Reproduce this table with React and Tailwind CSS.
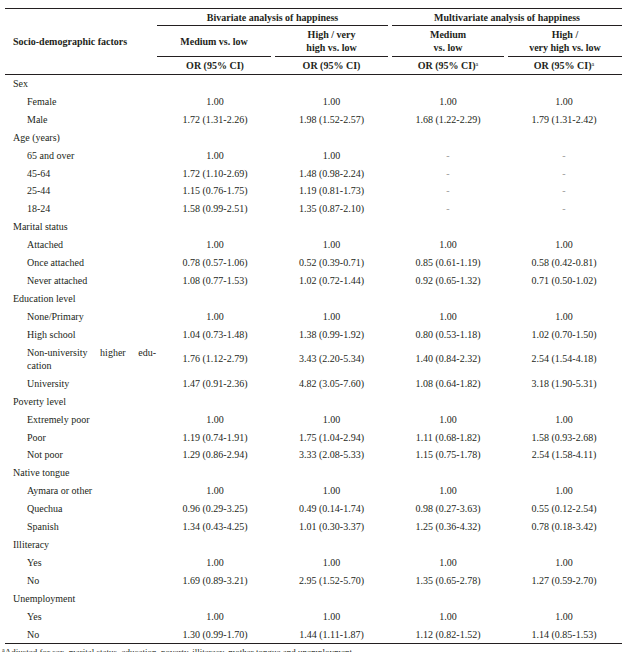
import React from "react";

const grid = "grid grid-cols-[152px_116px_117px_116px_116px]";

const rows = [
  { label: "Sex", cat: true },
  { label: "Female", v: ["1.00", "1.00", "1.00", "1.00"] },
  { label: "Male", v: ["1.72 (1.31-2.26)", "1.98 (1.52-2.57)", "1.68 (1.22-2.29)", "1.79 (1.31-2.42)"] },
  { label: "Age (years)", cat: true },
  { label: "65 and over", v: ["1.00", "1.00", "-", "-"] },
  { label: "45-64", v: ["1.72 (1.10-2.69)", "1.48 (0.98-2.24)", "-", "-"] },
  { label: "25-44", v: ["1.15 (0.76-1.75)", "1.19 (0.81-1.73)", "-", "-"] },
  { label: "18-24", v: ["1.58 (0.99-2.51)", "1.35 (0.87-2.10)", "-", "-"] },
  { label: "Marital status", cat: true },
  { label: "Attached", v: ["1.00", "1.00", "1.00", "1.00"] },
  { label: "Once attached", v: ["0.78 (0.57-1.06)", "0.52 (0.39-0.71)", "0.85 (0.61-1.19)", "0.58 (0.42-0.81)"] },
  { label: "Never attached", v: ["1.08 (0.77-1.53)", "1.02 (0.72-1.44)", "0.92 (0.65-1.32)", "0.71 (0.50-1.02)"] },
  { label: "Education level", cat: true },
  { label: "None/Primary", v: ["1.00", "1.00", "1.00", "1.00"] },
  { label: "High school", v: ["1.04 (0.73-1.48)", "1.38 (0.99-1.92)", "0.80 (0.53-1.18)", "1.02 (0.70-1.50)"] },
  { label: "nonuni", v: ["1.76 (1.12-2.79)", "3.43 (2.20-5.34)", "1.40 (0.84-2.32)", "2.54 (1.54-4.18)"] },
  { label: "University", v: ["1.47 (0.91-2.36)", "4.82 (3.05-7.60)", "1.08 (0.64-1.82)", "3.18 (1.90-5.31)"] },
  { label: "Poverty level", cat: true },
  { label: "Extremely poor", v: ["1.00", "1.00", "1.00", "1.00"] },
  { label: "Poor", v: ["1.19 (0.74-1.91)", "1.75 (1.04-2.94)", "1.11 (0.68-1.82)", "1.58 (0.93-2.68)"] },
  { label: "Not poor", v: ["1.29 (0.86-2.94)", "3.33 (2.08-5.33)", "1.15 (0.75-1.78)", "2.54 (1.58-4.11)"] },
  { label: "Native tongue", cat: true },
  { label: "Aymara or other", v: ["1.00", "1.00", "1.00", "1.00"] },
  { label: "Quechua", v: ["0.96 (0.29-3.25)", "0.49 (0.14-1.74)", "0.98 (0.27-3.63)", "0.55 (0.12-2.54)"] },
  { label: "Spanish", v: ["1.34 (0.43-4.25)", "1.01 (0.30-3.37)", "1.25 (0.36-4.32)", "0.78 (0.18-3.42)"] },
  { label: "Illiteracy", cat: true },
  { label: "Yes", v: ["1.00", "1.00", "1.00", "1.00"] },
  { label: "No", v: ["1.69 (0.89-3.21)", "2.95 (1.52-5.70)", "1.35 (0.65-2.78)", "1.27 (0.59-2.70)"] },
  { label: "Unemployment", cat: true },
  { label: "Yes", v: ["1.00", "1.00", "1.00", "1.00"] },
  { label: "No", v: ["1.30 (0.99-1.70)", "1.44 (1.11-1.87)", "1.12 (0.82-1.52)", "1.14 (0.85-1.53)"] },
];

function Row({ r }) {
  if (r.cat) {
    return (
      <div className="h-[17.93px] flex items-center pl-[8px]">{r.label}</div>
    );
  }
  const tall = r.label === "nonuni";
  return (
    <div className={`${grid} items-center ${tall ? "h-[31px]" : "h-[17.93px]"}`}>
      {tall ? (
        <div className="pl-[22px] pr-[1px] leading-[13px]">
          <div className="flex justify-between">
            <span>Non-university</span>
            <span>higher</span>
            <span>edu-</span>
          </div>
          <div>cation</div>
        </div>
      ) : (
        <div className="pl-[22px]">{r.label}</div>
      )}
      {r.v.map((x, i) => (
        <div key={i} className={`text-center ${x === "-" ? "text-[#9a9a9a]" : ""}`}>
          {x}
        </div>
      ))}
    </div>
  );
}

export default function App() {
  return (
    <div
      className="w-[629px] h-[652px] bg-white overflow-hidden text-[10px] text-[#231f20] leading-[13px]"
      style={{ fontFamily: '"Liberation Serif", "Times New Roman", serif' }}
    >
      <div className="ml-[5px] w-[617px] pt-[8px]">
        <div className="border-t-[1.5px] border-[#231f20]" />

        {/* header row 1 */}
        <div className={`${grid} h-[17px]`}>
          <div />
          <div className="col-span-2 mr-[2px] border-b border-[#231f20] flex items-center justify-center font-bold">
            Bivariate analysis of happiness
          </div>
          <div className="col-span-2 ml-[2px] border-b border-[#231f20] flex items-center justify-center font-bold">
            Multivariate analysis of happiness
          </div>
        </div>

        {/* header row 2 */}
        <div className={`${grid} h-[31px] font-bold`}>
          <div className="flex items-center pl-[8px]">Socio-demographic factors</div>
          <div className="mr-[2px] border-b border-[#231f20] flex items-center justify-center">
            Medium vs. low
          </div>
          <div className="mx-[2px] border-b border-[#231f20] flex flex-col items-center justify-center">
            <span>High / very</span>
            <span>high vs. low</span>
          </div>
          <div className="mx-[2px] border-b border-[#231f20] flex flex-col items-center justify-center">
            <span>Medium</span>
            <span>vs. low</span>
          </div>
          <div className="ml-[2px] border-b border-[#231f20] flex flex-col items-center justify-center">
            <span>High /</span>
            <span>very high vs. low</span>
          </div>
        </div>

        {/* header row 3 */}
        <div className={`${grid} h-[16.5px] items-center font-bold`}>
          <div />
          <div className="text-center">OR (95% CI)</div>
          <div className="text-center">OR (95% CI)</div>
          <div className="text-center">
            OR (95% CI)<sup className="text-[6px] font-normal">a</sup>
          </div>
          <div className="text-center">
            OR (95% CI)<sup className="text-[6px] font-normal">a</sup>
          </div>
        </div>
        <div className="border-t-[1.5px] border-[#231f20]" />

        {rows.map((r, i) => (
          <Row key={i} r={r} />
        ))}

        <div className="border-t-[1.5px] border-[#231f20]" />
        <div className="mt-[3px] -ml-[3px] text-[9px] leading-[11px] whitespace-nowrap">
          <sup className="text-[6px]">a</sup>Adjusted for sex, marital status, education, poverty, illiteracy, mother tongue and unemployment.
        </div>
      </div>
    </div>
  );
}
